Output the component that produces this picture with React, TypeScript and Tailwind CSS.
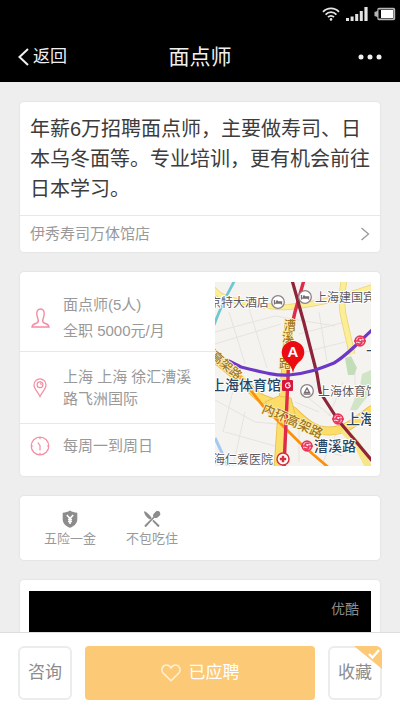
import { ReactNode } from "react";

const TITLE = "年薪6万招聘面点师，主要做寿司、日本乌冬面等。专业培训，更有机会前往日本学习。";

function StatusBar() {
  return (
    <div className="flex h-7 items-center justify-end gap-[6px] pr-1">
      <svg width="18" height="14" viewBox="0 0 18 14" fill="none" stroke="#e4e4e4" strokeWidth="1.8">
        <path d="M1 4.8C5.5.2 12.5.2 17 4.8" />
        <path d="M3.6 7.6c3-3.2 7.8-3.2 10.8 0" />
        <path d="M6 10.2c1.7-1.8 4.3-1.8 6 0" />
        <circle cx="9" cy="12.4" r="1.3" fill="#e4e4e4" stroke="none" />
      </svg>
      <svg width="22" height="14" viewBox="0 0 22 14" fill="#e4e4e4">
        <rect x="0" y="11" width="3" height="3" />
        <rect x="4.6" y="9.5" width="3" height="4.5" />
        <rect x="9.2" y="7" width="3" height="7" />
        <rect x="13.8" y="4" width="3" height="10" />
        <rect x="18.4" y="0" width="3.2" height="14" />
      </svg>
      <svg width="22" height="14" viewBox="0 0 22 14">
        <path d="M5 .8h14.500a1.700 1.700 0 0 1 1.700 1.700v9a1.700 1.700 0 0 1-1.700 1.700H5A1.700 1.700 0 0 1 3.300 11.500V10L.5 9V5l2.800-1V2.500A1.700 1.700 0 0 1 5 .8z" fill="#b5b5b5" />
        <path d="M4.500 2.500h14.800v9H4.500z" fill="#000" />
        <path d="M7 3h12v8H7z" fill="#fff" />
      </svg>
    </div>
  );
}

function Header() {
  return (
    <header className="shrink-0 bg-black text-[#f0f0f0]">
      <StatusBar />
      <div className="grid h-[54px] grid-cols-3 items-center px-[18px] pt-[3px]">
        <button className="flex items-center gap-1 text-[17px]">
          <svg width="11" height="18" viewBox="0 0 11 18" fill="none" stroke="currentColor" strokeWidth="2">
            <path d="M10 1 1.500 9l8.500 8" />
          </svg>
          返回
        </button>
        <h1 className="text-center text-[21px]">面点师</h1>
        <button aria-label="更多" className="justify-self-end">
          <svg width="24" height="6" viewBox="0 0 24 6" fill="currentColor">
            <circle cx="3" cy="3" r="2.5" />
            <circle cx="12" cy="3" r="2.5" />
            <circle cx="21" cy="3" r="2.5" />
          </svg>
        </button>
      </div>
    </header>
  );
}

function Card({ className = "", children }: { className?: string; children: ReactNode }) {
  return (
    <section className={`shrink-0 rounded bg-white shadow-[0_0_2px_rgba(0,0,0,0.12)] ${className}`}>
      {children}
    </section>
  );
}

function MetroMark({ x, y }: { x: number; y: number }) {
  return (
    <g transform={`translate(${x} ${y})`} fill="none" stroke="#e8365a" strokeWidth="1.7">
      <circle r="4.8" fill="#fde3e8" />
      <path d="M2.500-2.300C0-3.800-3-2 -1.500-.3S3 .8 1.500 2.300-2 3-3 2M-6 0h5M1 0h5" />
    </g>
  );
}

function PlaceMark({ x, y, children }: { x: number; y: number; children: ReactNode }) {
  return (
    <g transform={`translate(${x} ${y})`}>
      <circle r="6.3" fill="#fff" stroke="#8d8488" strokeWidth="1.3" />
      {children}
    </g>
  );
}

const bed = <path d="M-3.500-2v4.500M-3.500 1.200h7M3.500 2.500V0h-5.500M-2-.8h2" stroke="#776d72" strokeWidth="1.3" fill="none" />;

function JobMap() {
  return (
    <svg
      className="h-[184px] w-full"
      viewBox="0 0 156 184"
      preserveAspectRatio="xMidYMid slice"
      role="img"
      aria-label="地图"
    >
      <rect width="156" height="184" fill="#f5f3f0" />
      <g fill="none" stroke="#e6e3df" strokeWidth="1">
        <path d="M0 50 60 34l60 10M14 30l16 52M34 26l18 60M0 62l66-20M84 52l46-12M90 70l40-10M104 30l8 50M0 118l40 22 22 2M20 100 8 150M30 130 18 184M10 150l50 14M80 120l24 10M84 140v40M104 168l24 6M128 100l-14 34M140 90v40M86 110l30 24M122 150l-14 30" />
      </g>
      <path d="m147 92 9-4v22l-14 18h-7l10-24z" fill="#cfe5c6" />
      <path d="m130 76 6-2 6 12-3 7h-6z" fill="#c2ddb8" />

      <g fill="none" strokeLinejoin="round">
        <g stroke="#e9d27a">
          <path d="M-2 7c8 9 16 11 30 13 16 3 30 6 46 5 20-2 40-5 84-20" strokeWidth="6" />
          <path d="M129-2c-2 12-3 22-1 34l9 40" strokeWidth="6.5" />
        </g>
        <g stroke="#fbee94">
          <path d="M-2 7c8 9 16 11 30 13 16 3 30 6 46 5 20-2 40-5 84-20" strokeWidth="4.6" />
          <path d="M129-2c-2 12-3 22-1 34l9 40" strokeWidth="5" />
        </g>
        <path d="m-2 75 22 18 24 22c14 8 24 6 34 14 12 12 22 20 36 20 18 0 26-10 44-22" stroke="#e8bd48" strokeWidth="9" />
        <path d="m-2 75 22 18 24 22c14 8 24 6 34 14 12 12 22 20 36 20 18 0 26-10 44-22" stroke="#fbdd68" strokeWidth="7.4" />
        <path d="M74 40 70 95l-4 50-3 42" stroke="#e8bd48" strokeWidth="9" />
        <path d="M74 40 70 95l-4 50-3 42" stroke="#fbdf6c" strokeWidth="7.4" />
        <path d="m50 120 14-6 12 2 4 16-12 12-10-14z" fill="#fbdd68" stroke="#e8c354" strokeWidth="1" />
        <path d="m128 148 14 14 12 24" stroke="#f8e585" strokeWidth="7" />
        <path d="M20-2C12 12 6 24-1 43" stroke="#6fc7d2" strokeWidth="2.8" />
        <path d="m0 156 14 30" stroke="#a3c8f1" strokeWidth="3" />
        <path d="m-2 76 28 20 22 28 37 37 29 25" stroke="#f9900f" strokeWidth="2.8" />
        <path d="M89-2 80 30l-6 26-1 40-4 90" stroke="#de2b49" strokeWidth="3.4" />
        <path d="m77-2 12 43 13 51 3 18 18 28 35 42" stroke="#8e2439" strokeWidth="3.2" />
        <path d="m12 78 14 7c24 6 36 9 48 8 20-2 30-6 45-12 12-7 20-16 39-34" stroke="#6c38c4" strokeWidth="3.2" />
      </g>

      <g
        fontSize="12"
        fill="#5f5961"
        stroke="#fff"
        strokeWidth="2"
        strokeLinejoin="round"
        paintOrder="stroke"
      >
        <text x="-6" y="25">京特大酒店</text>
        <text x="100" y="20">上海建国宾馆</text>
        <text x="103" y="114">上海体育馆</text>
        <text x="-2" y="182">海仁爱医院</text>
      </g>
      <g
        fontWeight="500"
        fill="#a17719"
        stroke="#fff3c4"
        strokeWidth="1.5"
        strokeLinejoin="round"
        paintOrder="stroke"
      >
        <text transform="translate(46 130) rotate(24)" fontSize="13">内环高架路</text>
        <g fontSize="12">
          <text transform="translate(-14 67) rotate(41)">环高架路</text>
          <text x="69" y="48">漕</text>
          <text x="67" y="60">溪</text>
          <text x="64" y="86">路</text>
        </g>
      </g>
      <g
        fontSize="14"
        fontWeight="500"
        fill="#274766"
        stroke="#fff"
        strokeWidth="2"
        strokeLinejoin="round"
        paintOrder="stroke"
      >
        <text x="-4" y="108">上海体育馆</text>
        <text x="131" y="142">上海</text>
        <text x="99" y="169">漕溪路</text>
        <text x="151" y="68">上</text>
      </g>

      <PlaceMark x={63} y={20}>{bed}</PlaceMark>
      <PlaceMark x={90} y={15}>{bed}</PlaceMark>
      <PlaceMark x={92} y={109}>
        <path d="M-3.500 3.200h7M-2.500 1.500 0-3l2.500 4.500z" fill="none" stroke="#776d72" strokeWidth="1.3" />
      </PlaceMark>
      <MetroMark x={145} y={59} />
      <MetroMark x={123} y={137} />
      <MetroMark x={92} y={164} />
      <rect x="67" y="98" width="11" height="11" rx="1" fill="#d8173f" />
      <path d="M75 101.500c-2-1.500-5 0-4.500 2.500s3.500 2.500 4.500.5v-1.500h-2" fill="none" stroke="#fff" strokeWidth="1.2" />
      <circle cx="68" cy="177" r="6" fill="#fff" stroke="#d6303e" strokeWidth="1.5" />
      <path d="M68 173.800v6.400M64.800 177h6.400" stroke="#d6303e" strokeWidth="2.4" />

      <path d="M78 91c-1-5-3-8-6-11a11.300 11.300 0 1 1 12 0c-3 3-5 6-6 11z" fill="#ea0c12" />
      <text x="78" y="75" textAnchor="middle" fontSize="15" fontWeight="700" fill="#fff">A</text>
    </svg>
  );
}

function InfoRow({ icon, className, children }: { icon: ReactNode; className: string; children: ReactNode }) {
  return (
    <div className={`flex items-center pl-[10px] ${className}`}>
      <span className="flex w-5 shrink-0 justify-center">{icon}</span>
      <div className="ml-[13px]">{children}</div>
    </div>
  );
}

function JobInfo() {
  return (
    <Card className="grid grid-cols-[minmax(0,1fr)_156px] pr-[9px]">
      <div className="text-[15px] text-[#999]">
        <InfoRow
          className="h-20 border-b border-[#e8e8e8] pt-3 leading-[26px]"
          icon={
            <svg width="19" height="20" viewBox="0 0 19 20" fill="none" stroke="#f58ba2" strokeWidth="1.4">
              <path d="M9.500 1C6.800 1 5.700 3 5.800 5.800c.1 2.400.8 4 1.300 5.600.5 1.700.2 3-1.300 3.600C3.500 15.800 1.200 16.300 1 19h17c-.2-2.700-2.500-3.200-4.800-4-1.500-.6-1.800-1.900-1.300-3.600.5-1.600 1.200-3.200 1.300-5.600C13.300 3 12.200 1 9.500 1z" />
            </svg>
          }
        >
          <p>面点师(5人)</p>
          <p>全职 5000元/月</p>
        </InfoRow>
        <InfoRow
          className="h-[72px] border-b border-[#e8e8e8] leading-[22px]"
          icon={
            <svg width="14" height="20" viewBox="0 0 14 20" fill="none" stroke="#f58ba2" strokeWidth="1.2">
              <path d="M7 18.500C5.500 14.500 1 11 1 6.900a6 6 0 0 1 12 0c0 4.100-4.500 7.600-6 11.600z" />
              <circle cx="7" cy="6.8" r="2.9" />
              <path d="M7 5.500a1.500 1.500 0 0 1 1.300 1.300" />
            </svg>
          }
        >
          <p>
            上海 上海 徐汇漕溪
            <br />
            路飞洲国际
          </p>
        </InfoRow>
        <InfoRow
          className="h-[52px] pb-2 leading-[22px]"
          icon={
            <svg width="20" height="20" viewBox="0 0 20 20" fill="none" stroke="#f58ba2" strokeWidth="1.2">
              <circle cx="10" cy="10" r="8.8" />
              <path d="M7.800 6.500 10 9.500v5M10 1.500v1.700M10 16.800v1.700M1.500 10h1.700M16.800 10h1.700" />
            </svg>
          }
        >
          <p>每周一到周日</p>
        </InfoRow>
      </div>
      <div className="self-center">
        <JobMap />
      </div>
    </Card>
  );
}

function Benefit({ label, children }: { label: string; children: ReactNode }) {
  return (
    <li className="flex flex-col items-center gap-[2px]">
      <svg width="18" height="18" viewBox="0 0 18 18" fill="#8c8c8c">
        {children}
      </svg>
      <span className="text-[13px] leading-[18px]">{label}</span>
    </li>
  );
}

export default function App() {
  return (
    <div className="flex h-screen flex-col bg-[#eee] font-['Liberation_Sans','Noto_Sans_CJK_SC',sans-serif]">
      <Header />

      <main className="flex min-h-0 flex-1 flex-col gap-5 overflow-hidden px-5 pt-5">
        <Card>
          <p className="px-[10px] pt-3 pb-[11px] text-[20px] leading-[30px] text-[#3c3c3c]">{TITLE}</p>
          <a
            href="#store"
            className="flex h-[37px] items-center justify-between border-t border-[#e8e8e8] px-[10px] text-[15px] text-[#999]"
          >
            伊秀寿司万体馆店
            <svg width="10" height="14" viewBox="0 0 10 14" fill="none" stroke="#999" strokeWidth="1.3">
              <path d="m1.500 1 7 6-7 6" />
            </svg>
          </a>
        </Card>

        <JobInfo />

        <Card className="pt-[14px] pb-3">
          <ul className="flex gap-[30px] px-6 text-[#999]">
            <Benefit label="五险一金">
              <path d="M9 .5c2.200 1.400 4.500 2 7.300 2.200v6.500c0 4-3 6.800-7.300 8.600-4.300-1.800-7.300-4.600-7.300-8.600V2.700C4.500 2.500 6.800 1.900 9 .5z" />
              <path d="m5.800 5 3.200 3.500L12.200 5M9 8v6M7 9.500h4M7 11.500h4" fill="none" stroke="#fff" strokeWidth="1.6" />
            </Benefit>
            <Benefit label="不包吃住">
              <path d="M1 1.200c2.500.4 6 4 7.700 6.800l-1.500 1.500C4 8 1.200 4.500 1 1.200z" />
              <path d="m10.500 9.800 5.800 5.400c.6.700-.7 2.200-1.500 1.500L9.300 11z" />
              <path d="M17.500 4.300 14.800 7c-1 1-2.300 1.200-3.400.7L3.200 16.800c-.8.700-2.300-.7-1.500-1.500l8.600-8.500c-.5-1.200-.2-2.400.7-3.300L13.800.8l.5.5-2 2.400.8.700 2.200-2.200.6.600-2.200 2.200.8.800 2.400-2z" />
              <path d="M11 5.500c0-2 2-4.500 4-4.500 1.500 0 2.500 1.500 2.200 3-.4 2-2.500 3.800-4.500 3.700z" />
            </Benefit>
          </ul>
        </Card>

        <Card className="px-[9px] pt-[11px]">
          <div className="flex h-48 justify-end bg-black px-3 pt-2 text-[14px] leading-5 text-[#8c8c8c]">优酷</div>
        </Card>
      </main>

      <footer className="flex h-20 shrink-0 items-center gap-[13px] border-t border-[#ddd] bg-white px-[18px] text-[17px]">
        <button className="h-[54px] w-[54px] shrink-0 rounded-md border-2 border-[#ececec] text-[#8c8c8c]">咨询</button>
        <button className="flex h-[54px] flex-1 items-center justify-center gap-2 rounded bg-[#fcc976] text-white">
          <svg width="20" height="18" viewBox="0 0 20 18" fill="none" stroke="#fff1d6" strokeWidth="1.5">
            <path d="M10 16.800 2.300 9.300C-1 5.500 2 1 5.500 1 7.500 1 9 2 10 4c1-2 2.500-3 4.500-3C18 1 21 5.500 17.700 9.300z" />
          </svg>
          已应聘
        </button>
        <button className="relative h-[54px] w-[54px] shrink-0 rounded-md border-2 border-[#ececec] text-[#8c8c8c]">
          收藏
          <svg className="absolute -top-[2px] -right-[2px] rounded-tr-md" width="28" height="23" viewBox="0 0 28 23">
            <path d="M0 0h28v23z" fill="#fcc976" />
            <path d="m15 8 3.500 3.500L25 4" fill="none" stroke="#fff" strokeWidth="2.4" />
          </svg>
        </button>
      </footer>
    </div>
  );
}
